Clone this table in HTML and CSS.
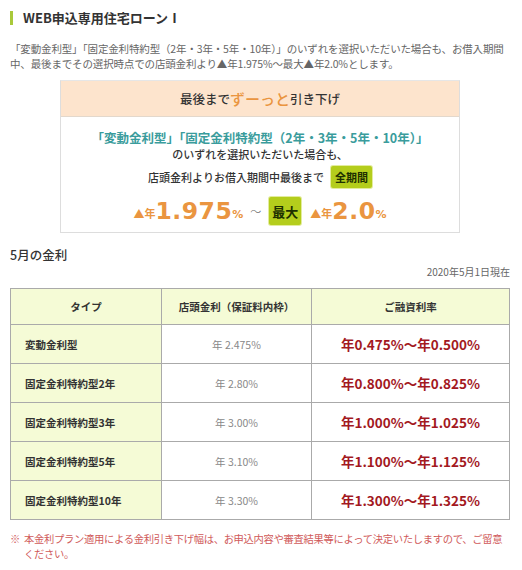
FILE: index.html
```html
<!DOCTYPE html>
<html lang="ja">
<head>
<meta charset="utf-8">
<link rel="stylesheet" href="styles.css">
</head>
<body>
<div class="page">
  <h1 class="title">WEB申込専用住宅ローンⅠ</h1>
  <p class="lead">「変動金利型」「固定金利特約型（2年・3年・5年・10年）」のいずれを選択いただいた場合も、お借入期間中、最後までその選択時点での店頭金利より▲年1.975%～最大▲年2.0%とします。</p>

  <div class="promo">
    <div class="promo-head">最後まで<span class="accent">ずーっと</span>引き下げ</div>
    <div class="promo-body">
      <p class="teal">「変動金利型」「固定金利特約型（2年・3年・5年・10年）」</p>
      <p class="line2">のいずれを選択いただいた場合も、</p>
      <p class="line3">店頭金利よりお借入期間中最後まで<span class="badge">全期間</span></p>
      <p class="rates">
        <span class="pre">▲年</span><span class="num">1.975</span><span class="pct">%</span>
        <span class="tilde">～</span>
        <span class="badge big">最大</span>
        <span class="pre">▲年</span><span class="num">2.0</span><span class="pct">%</span>
      </p>
    </div>
  </div>

  <h2 class="sub">5月の金利</h2>
  <p class="date">2020年5月1日現在</p>

  <table class="rate-table">
    <thead>
      <tr><th>タイプ</th><th>店頭金利（保証料内枠）</th><th>ご融資利率</th></tr>
    </thead>
    <tbody>
      <tr><td class="type">変動金利型</td><td class="base">年 2.475%</td><td class="rate">年0.475%～年0.500%</td></tr>
      <tr><td class="type">固定金利特約型2年</td><td class="base">年 2.80%</td><td class="rate">年0.800%～年0.825%</td></tr>
      <tr><td class="type">固定金利特約型3年</td><td class="base">年 3.00%</td><td class="rate">年1.000%～年1.025%</td></tr>
      <tr><td class="type">固定金利特約型5年</td><td class="base">年 3.10%</td><td class="rate">年1.100%～年1.125%</td></tr>
      <tr><td class="type">固定金利特約型10年</td><td class="base">年 3.30%</td><td class="rate">年1.300%～年1.325%</td></tr>
    </tbody>
  </table>

  <p class="note"><span class="mark">※</span><span>本金利プラン適用による金利引き下げ幅は、お申込内容や審査結果等によって決定いたしますので、ご留意ください。</span></p>
</div>
</body>
</html>
```

FILE: styles.css
```css
html, body {
  margin: 0;
  padding: 0;
  background: #fff;
}
body {
  font-family: "Noto Sans CJK JP", "Noto Sans", sans-serif;
  color: #333;
}
.page {
  padding: 10px 12px 0 10px;
}
.title {
  margin: 0;
  font-size: 13px;
  font-weight: bold;
  line-height: 16px;
  padding-left: 10px;
  border-left: 3px solid #a9c93a;
  height: 14px;
  display: flex;
  align-items: center;
  margin-top: 1px;
  color: #333;
}
.lead {
  margin: 16px 0 0 0;
  font-size: 10.5px;
  letter-spacing: -0.15px;
  line-height: 15px;
  color: #666;
}
.promo {
  width: 398px;
  margin: 9px auto 0;
  border: 1px solid #ddd;
  border-top-color: #e6e6e6;
}
.promo-head {
  background: #fde4cd;
  height: 35px;
  display: flex;
  align-items: center;
  justify-content: center;
  font-size: 12.5px;
  font-weight: 500;
  color: #333;
  border-bottom: 1px solid #e3d8cc;
}
.promo-head .accent {
  color: #ea9540;
  font-size: 15px;
  font-weight: 500;
}
.promo-body {
  text-align: center;
  padding: 12px 0 6px;
}
.promo-body p {
  margin: 0;
}
.teal {
  color: #3a9c9c;
  font-size: 12.5px;
  font-weight: bold;
  line-height: 17px;
}
.line2 {
  font-size: 11px;
  font-weight: 500;
  line-height: 17px;
}
.line3 {
  font-size: 11px;
  font-weight: 500;
  line-height: 24px;
  margin-top: 2px !important;
  display: flex;
  align-items: center;
  justify-content: center;
}
.badge {
  display: inline-flex;
  align-items: center;
  justify-content: center;
  background: #b4cd1c;
  color: #1d3000;
  font-size: 11px;
  font-weight: bold;
  height: 22px;
  padding: 0 4px;
  margin-left: 7px;
  border-radius: 2px;
  box-shadow: 0 0 0 1px #e3ec9e;
}
.rates {
  display: flex;
  align-items: center;
  justify-content: center;
  margin-top: 7px !important;
  height: 30px;
  color: #ea9540;
}
.pre {
  font-size: 11px;
  font-weight: bold;
  align-self: flex-end;
  margin-bottom: 5px;
}
.num {
  font-family: "DejaVu Sans", sans-serif;
  font-size: 23.5px;
  font-weight: bold;
  letter-spacing: 0.5px;
  line-height: 30px;
}
.pct {
  font-family: "DejaVu Sans", sans-serif;
  font-size: 11px;
  font-weight: bold;
  align-self: flex-end;
  margin-bottom: 5px;
}
.tilde {
  color: #666;
  font-size: 11px;
  font-weight: 300;
  margin: 0 8px 0 7px;
}
.badge.big {
  font-size: 13px;
  height: 28px;
  padding: 0 3px;
  margin: 0 9px 0 0;
}
.sub {
  margin: 13px 0 0 0;
  font-size: 12.5px;
  font-weight: 500;
  line-height: 18px;
  color: #333;
}
.date {
  margin: 0;
  text-align: right;
  font-size: 10px;
  line-height: 16px;
  color: #666;
}
.rate-table {
  margin-top: 8px;
  width: 500px;
  border-collapse: collapse;
  table-layout: fixed;
}
.rate-table th,
.rate-table td {
  border: 1px solid #aaa;
  font-size: 10.5px;
  padding: 0;
}
.rate-table th {
  background: #f5fbd6;
  height: 35px;
  font-weight: bold;
  color: #333;
}
.rate-table th:nth-child(1) { width: 150px; }
.rate-table th:nth-child(2) { width: 149px; }
.rate-table td {
  height: 38px;
}
.rate-table td.type {
  background: #f5fbd6;
  font-weight: bold;
  padding-left: 14px;
  color: #333;
}
.rate-table td.base {
  text-align: center;
  color: #888;
}
.rate-table td.rate {
  text-align: center;
  color: #a3191f;
  font-size: 13.5px;
  font-weight: bold;
}
.note {
  margin: 11px 0 0 0;
  display: flex;
  font-size: 10.3px;
  letter-spacing: -0.3px;
  line-height: 15px;
  color: #d05a5a;
}
.note .mark {
  flex: none;
  width: 14px;
}
```
